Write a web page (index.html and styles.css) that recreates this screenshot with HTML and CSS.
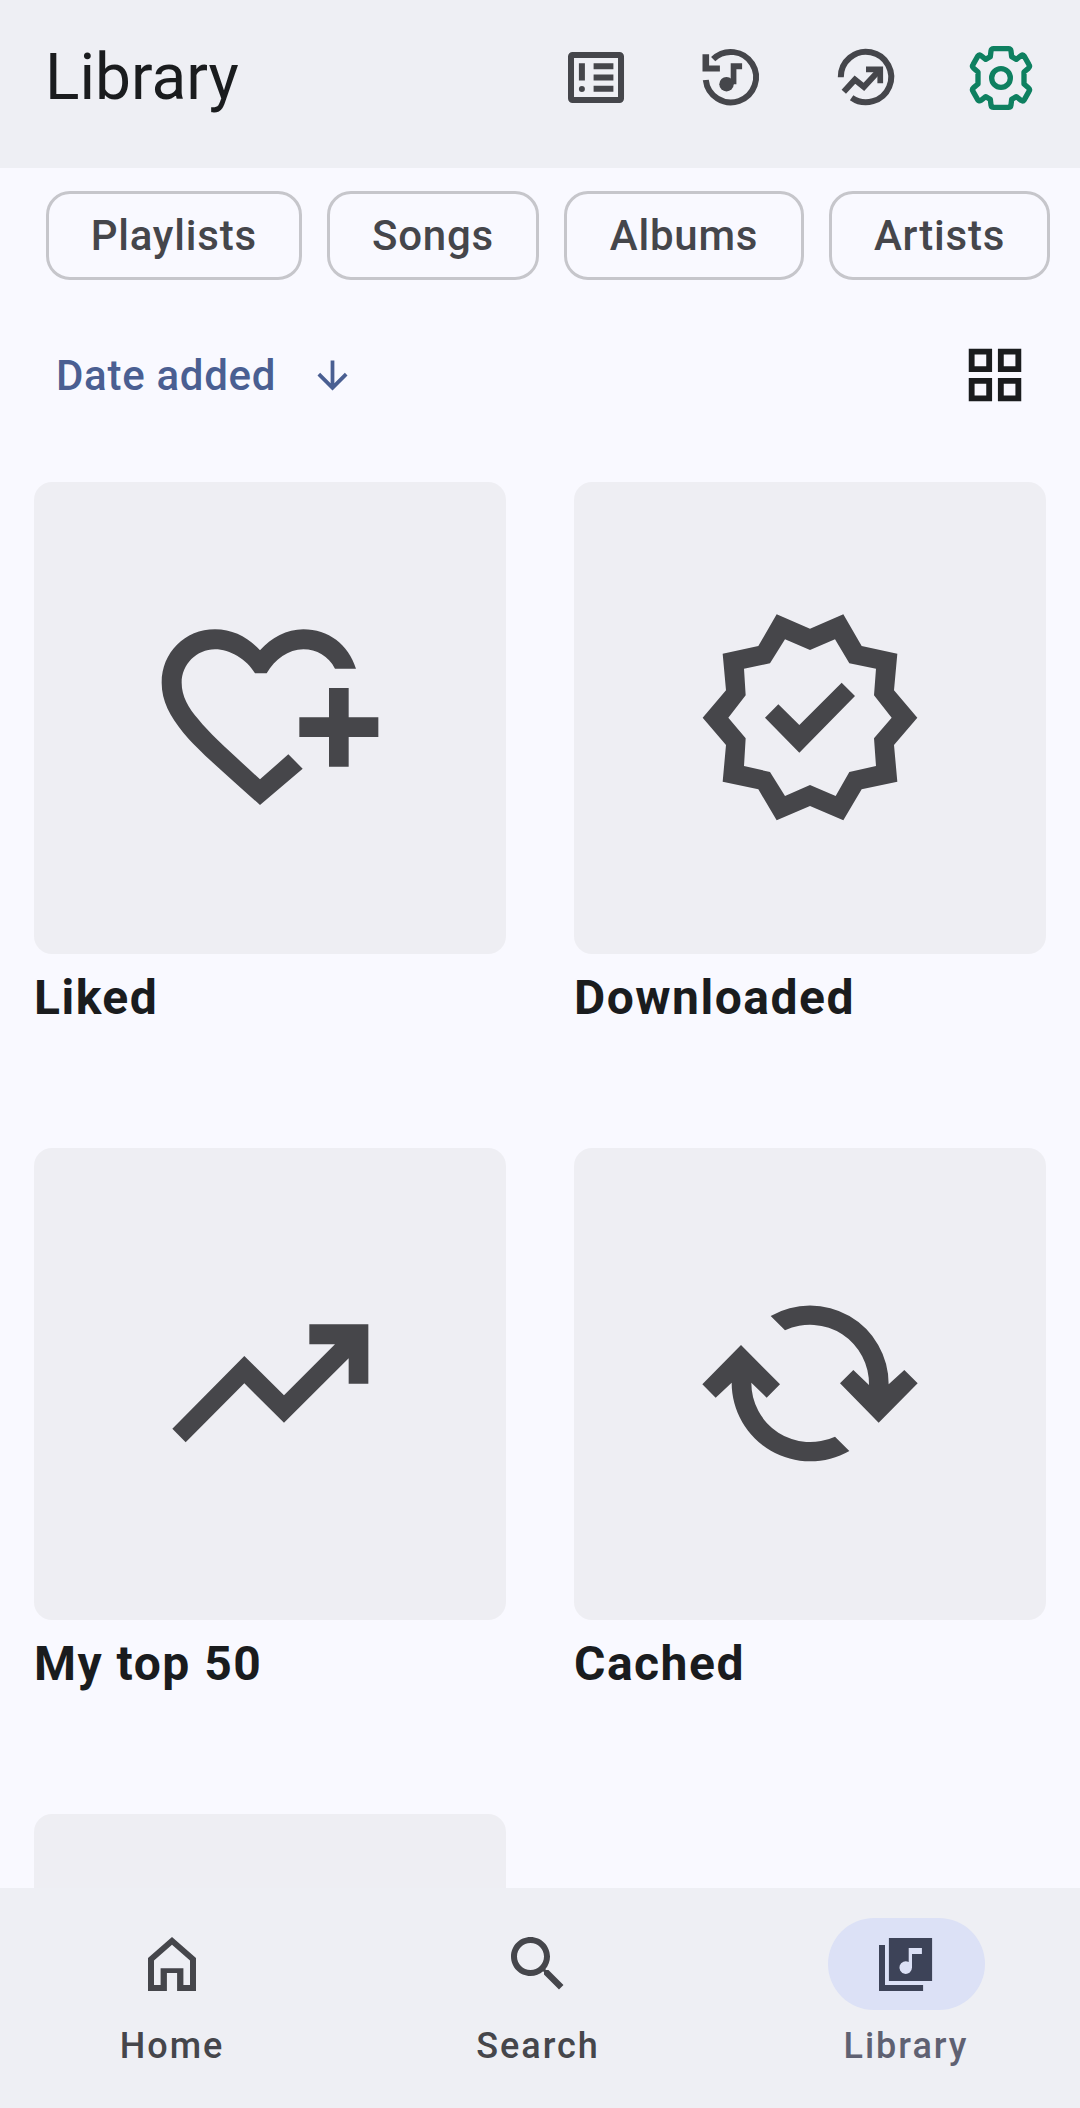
FILE: index.html
```html
<!DOCTYPE html>
<html lang="en">
<head>
    <meta charset="UTF-8">
    <meta name="viewport" content="width=device-width, initial-scale=1.0">
    <title>Library</title>
    <link rel="stylesheet" href="styles.css">
</head>
<body>

<div class="app">
    <header class="top-bar">
        <h1 class="top-title">Library</h1>
        <div class="top-actions">
            <button class="icon-btn">
                <svg class="icon" viewBox="0 0 24 24">
                    <rect x="3.67" y="4.67" width="16.67" height="15" rx="0.5" fill="none" stroke="currentColor" stroke-width="2"/>
                    <path d="M6.3 7.4h2v5.8h-2zM11.2 7.4h6.6v2h-6.6zM11.2 11.15h6.6v2h-6.6zM11.2 14.9h6.6v2h-6.6z"/>
                    <circle cx="7.3" cy="16" r="1"/>
                </svg>
            </button>
            <button class="icon-btn">
                <svg class="icon" viewBox="0 0 24 24">
                    <path d="M3.6 13A8.4 8.4 0 1 0 6.06 6.06" fill="none" stroke="currentColor" stroke-width="2"/>
                    <path d="M2.5 4.4h2.2v3.8h3.6v2H2.5z"/>
                    <path d="M11.9 7.4h3.8v2h-1.9v5h-1.9z"/>
                    <circle cx="10.5" cy="14.4" r="2.4"/>
                </svg>
            </button>
            <button class="icon-btn">
                <svg class="icon" viewBox="0 0 24 24">
                    <path d="M3.6 12.1A8.4 8.4 0 1 1 7.2 18.9" fill="none" stroke="currentColor" stroke-width="2"/>
                    <path d="M4.6 16.9L8.3 12.9L11.3 15.3L16.2 10" fill="none" stroke="currentColor" stroke-width="2"/>
                    <path d="M12 8.5h5.7v5.6h-1.9v-3.7H12z"/>
                </svg>
            </button>
            <button class="icon-btn settings">
                <svg class="icon gear" viewBox="18 15 216 216">
                    <path d="M104 38H148Q155 38 156 45L158 62L172 70L186 59Q192 55 196 61L210 86Q214 92 208 97L195 108V144L208 155Q214 160 210 166L196 191Q192 197 186 193L172 182L158 190L156 207Q155 214 148 214H104Q97 214 96 207L94 190L80 182L66 193Q60 197 56 191L42 166Q38 160 44 155L57 144V108L44 97Q38 92 42 86L56 61Q60 55 66 59L80 70L94 62L96 45Q97 38 104 38Z"/>
                    <circle cx="126" cy="126" r="28"/>
                </svg>
            </button>
        </div>
    </header>

    <div class="chips">
        <button class="chip chip-playlists">Playlists</button>
        <button class="chip chip-songs">Songs</button>
        <button class="chip chip-albums">Albums</button>
        <button class="chip chip-artists">Artists</button>
    </div>

    <div class="sort-row">
        <div class="sort-label">
            <span>Date added</span>
            <svg class="sort-arrow" viewBox="0 0 24 24"><path d="M20 12l-1.41-1.41L13 16.17V4h-2v12.17l-5.58-5.59L4 12l8 8 8-8z"/></svg>
        </div>
        <svg class="grid-toggle" viewBox="0 0 24 24"><path d="M3 3v8h8V3H3zm6 6H5V5h4v4zm-6 4v8h8v-8H3zm6 6H5v-4h4v4zm4-16v8h8V3h-8zm6 6h-4V5h4v4zm-6 4v8h8v-8h-8zm6 6h-4v-4h4v4z"/></svg>
    </div>

    <main class="grid">
        <div class="tile">
            <div class="tile-art">
                <svg class="art-icon" width="260" height="230" viewBox="0 6 780 690">
                    <path d="M360 612L488 503L445 460L360 535C290 470 215 405 175 355C145 320 125 285 125 245C125 190 170 145 225 145C270 145 320 175 345 217H380C405 175 445 145 490 145C530 145 565 165 585 203H648C625 130 565 85 490 85C440 85 395 110 360 148C325 110 280 85 225 85C135 85 65 155 65 245C65 300 90 345 130 395C180 455 280 540 360 612Z"/>
                    <path d="M567 261h59v88h89v59h-89v89h-59v-89h-89v-59h89z"/>
                </svg>
            </div>
            <div class="tile-name">Liked</div>
        </div>
        <div class="tile">
            <div class="tile-art">
                <svg class="art-icon" width="240" height="230" viewBox="0 6 720 690">
                    <path fill-rule="evenodd" d="M260 40L360 83L460 40L515 135L622 158L612 268L682 350L612 432L622 542L515 565L460 658L360 615L260 658L205 565L98 542L108 432L38 350L108 268L98 158L205 135ZM285 115L240 187L162 203L167 283L115 350L167 412L162 495L240 513L285 585L360 552L437 585L478 513L558 495L552 412L605 350L552 283L558 203L478 187L435 115L360 147Z"/>
                    <path d="M225 350L265 310L328 372L455 245L495 285L328 455Z"/>
                </svg>
            </div>
            <div class="tile-name">Downloaded</div>
        </div>
        <div class="tile">
            <div class="tile-art">
                <svg class="art-icon" width="240" height="170" viewBox="0 -6 720 510">
                    <path d="M478 70H655V248H596V172L402 365L283 247L107 424L67 383L283 165L402 283L555 130H478Z"/>
                </svg>
            </div>
            <div class="tile-name">My top 50</div>
        </div>
        <div class="tile">
            <div class="tile-art">
                <svg class="art-icon" width="240" height="190" viewBox="0 -6 720 570">
                    <path d="M242 75A236 236 0 0 1 596 280L643 237L683 277L566 395L450 277L490 237L537 282A177 177 0 0 0 285 118Z"/>
                    <path d="M153 162L270 280L230 320L184 275A177 177 0 0 0 435 437L478 480A236 236 0 0 1 125 275L77 320L37 280Z"/>
                </svg>
            </div>
            <div class="tile-name">Cached</div>
        </div>
        <div class="tile">
            <div class="tile-art"></div>
        </div>
    </main>

    <nav class="bottom-nav">
        <div class="nav-item">
            <div class="nav-pill">
                <svg class="icon" viewBox="0 0 24 24"><path fill-rule="evenodd" d="M4 21V10L12 3L20 10V21H13.7V15H10.3V21ZM6 19H8.2V13.4H15.8V19H18V10.8L12 5.6L6 10.8Z"/></svg>
            </div>
            <span class="nav-label">Home</span>
        </div>
        <div class="nav-item">
            <div class="nav-pill">
                <svg class="icon" viewBox="0 0 24 24"><path d="M15.5 14h-.79l-.28-.27C15.41 12.59 16 11.11 16 9.5 16 5.91 13.09 3 9.5 3S3 5.91 3 9.5 5.91 16 9.5 16c1.61 0 3.09-.59 4.23-1.57l.27.28v.79l5 4.99L20.49 19l-4.99-5zm-6 0C7.01 14 5 11.99 5 9.5S7.01 5 9.5 5 14 7.01 14 9.5 11.99 14 9.5 14z"/></svg>
            </div>
            <span class="nav-label">Search</span>
        </div>
        <div class="nav-item active">
            <div class="nav-pill">
                <svg class="icon" viewBox="0 0 24 24">
                    <path fill-rule="evenodd" d="M6.3 3.3H20.7V17.7H6.3ZM12.9 6.7H17.3V8.7H14V13.2A2.1 2.1 0 1 1 12.9 11.35Z"/>
                    <path d="M3 5.7h2V19h12.7v2H3z"/>
                </svg>
            </div>
            <span class="nav-label">Library</span>
        </div>
    </nav>
</div>

</body>
</html>
```

FILE: styles.css
```css
body {
    margin: 0;
    font-family: Roboto, "Noto Sans", sans-serif;
    background-color: #f9f9ff;
    color: #1a1c1e;
}

button {
    font-family: inherit;
    background: none;
    border: none;
    padding: 0;
}

svg {
    display: block;
    fill: currentColor;
}

.app {
    width: 1080px;
    height: 2108px;
    display: flex;
    flex-direction: column;
    overflow: hidden;
}

.icon {
    width: 72px;
    height: 72px;
    flex-shrink: 0;
}

/* top bar */
.top-bar {
    height: 168px;
    flex-shrink: 0;
    display: flex;
    align-items: center;
    justify-content: space-between;
    padding: 0 11.5px 14px 45px;
    box-sizing: border-box;
    background-color: #eeeff4;
}

.top-title {
    margin: 0;
    font-size: 64px;
    font-weight: 400;
    color: #1a1c1e;
}

.top-actions {
    display: flex;
}

.icon-btn {
    width: 135px;
    display: flex;
    justify-content: center;
    color: #45464b;
}

.icon-btn.settings {
    color: #0e8060;
}

.gear {
    fill: none;
    stroke: currentColor;
    stroke-width: 16;
    stroke-linejoin: round;
}

/* filter chips */
.chips {
    display: flex;
    gap: 25px;
    padding: 23px 0 0 45.5px;
    flex-shrink: 0;
}

.chip {
    box-sizing: border-box;
    height: 89px;
    border: 3px solid #c6c6cb;
    border-radius: 24px;
    font-size: 42px;
    font-weight: 500;
    letter-spacing: 0.8px;
    color: #45464b;
    flex-shrink: 0;
}

.chip-playlists { width: 256.5px; }
.chip-songs { width: 212px; }
.chip-albums { width: 240px; }
.chip-artists { width: 221px; }

/* sort row */
.sort-row {
    display: flex;
    align-items: center;
    justify-content: space-between;
    height: 72px;
    margin: 59px 58px 71px 56px;
    flex-shrink: 0;
}

.sort-label {
    display: flex;
    align-items: center;
    gap: 34px;
    font-size: 42px;
    font-weight: 500;
    letter-spacing: 0.7px;
    color: #4a5f92;
}

.sort-arrow {
    width: 45px;
    height: 45px;
}

.grid-toggle {
    width: 70px;
    height: 70px;
    margin-right: -8px;
    color: #1a1c1e;
}

/* library grid */
.grid {
    flex: 1;
    min-height: 0;
    display: grid;
    grid-template-columns: 472px 472px;
    grid-auto-rows: 666px;
    column-gap: 68px;
    padding: 0 34px;
}

.tile-art {
    width: 472px;
    height: 472px;
    display: flex;
    align-items: center;
    justify-content: center;
    background-color: #eeeef3;
    border-radius: 18px;
    color: #46464a;
}

.tile-name {
    margin-top: 15px;
    font-size: 48px;
    font-weight: 700;
    letter-spacing: 1.5px;
    color: #1a1c1e;
}

/* bottom nav */
.bottom-nav {
    height: 220px;
    flex-shrink: 0;
    display: flex;
    background-color: #eeeff4;
    position: relative;
}

.nav-item {
    position: absolute;
    top: 30px;
    display: flex;
    flex-direction: column;
    align-items: center;
    color: #45464b;
}

.nav-item:nth-child(1) { left: 93.5px; }
.nav-item:nth-child(2) { left: 459.5px; }
.nav-item:nth-child(3) { left: 827.5px; }

.nav-pill {
    width: 157px;
    height: 92px;
    display: flex;
    align-items: center;
    justify-content: center;
    border-radius: 46px;
}

.nav-item.active .nav-pill {
    background-color: #dce1f6;
    color: #3d4358;
}

.nav-label {
    margin-top: 15px;
    font-size: 36px;
    font-weight: 500;
    letter-spacing: 2px;
    color: #45464b;
}

.nav-item.active .nav-label {
    color: #5f6172;
}
```
